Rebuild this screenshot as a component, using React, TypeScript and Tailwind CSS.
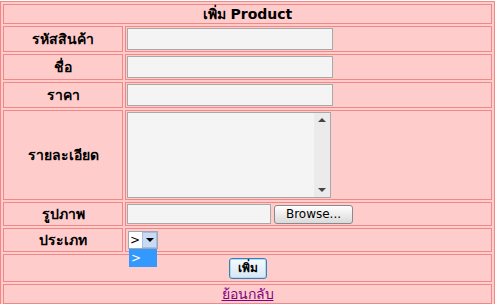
const cell = "border border-[#f08888]";
const labelCell = `${cell} flex items-center justify-center font-bold text-[14px] text-black`;

function TextBox() {
  return <div className="h-[22px] w-[206px] border border-[#a8a8a8] bg-[#f4f4f4]" />;
}

export default function App() {
  return (
    <div className="bg-white pt-px" style={{ fontFamily: '"DejaVu Sans", "Noto Sans", sans-serif' }}>
      <div className="grid grid-cols-[120px_1fr] gap-[2px] border border-[#f08888] bg-[#ffcccc] p-[2px]">
        <div className={`${cell} col-span-2 flex h-[20px] items-center justify-center text-[14px] font-bold text-black`}>
          เพิ่ม Product
        </div>

        <div className={`${labelCell} h-[26px]`}>รหัสสินค้า</div>
        <div className={`${cell} flex h-[26px] items-center px-px`}>
          <TextBox />
        </div>

        <div className={`${labelCell} h-[26px]`}>ชื่อ</div>
        <div className={`${cell} flex h-[26px] items-center px-px`}>
          <TextBox />
        </div>

        <div className={`${labelCell} h-[26px]`}>ราคา</div>
        <div className={`${cell} flex h-[26px] items-center px-px`}>
          <TextBox />
        </div>

        <div className={`${labelCell} h-[90px]`}>รายละเอียด</div>
        <div className={`${cell} h-[90px] px-px pt-px`}>
          <div className="flex h-[86px] w-[204px] border border-[#a8a8a8] bg-[#f4f4f4]">
            <div className="flex-1" />
            <div className="flex w-[16px] flex-col items-center justify-between bg-[#ebebeb] py-[5px]">
              <div className="h-0 w-0 border-x-[4px] border-b-[4px] border-x-transparent border-b-[#444]" />
              <div className="h-0 w-0 border-x-[4px] border-t-[4px] border-x-transparent border-t-[#444]" />
            </div>
          </div>
        </div>

        <div className={`${labelCell} h-[24px]`}>รูปภาพ</div>
        <div className={`${cell} flex h-[24px] items-center gap-[3px] px-px`}>
          <div className="h-[20px] w-[144px] border border-[#a8a8a8] bg-[#f4f4f4]" />
          <div className="flex h-[19px] w-[79px] items-center justify-center rounded-[3px] border border-[#8a8a8a] bg-gradient-to-b from-white to-[#dadada] text-[12px] text-black">
            Browse...
          </div>
        </div>

        <div className={`${labelCell} h-[24px]`}>ประเภท</div>
        <div className={`${cell} relative flex h-[24px] items-center pl-[2px]`}>
          <div className="flex h-[18px] w-[30px] items-stretch border border-[#9aa8b8] bg-white">
            <span className="flex-1 pl-[1px] text-[12px] leading-[16px] text-black">&gt;</span>
            <div className="flex w-[15px] items-center justify-center border border-[#a7bddb] bg-[#c8daf4]">
              <div className="h-0 w-0 border-x-[4px] border-t-[4px] border-x-transparent border-t-black" />
            </div>
          </div>
          <div className="absolute left-[3px] top-[20px] z-10 h-[18px] w-[28px] bg-[#3399ff] pl-[2px] text-[12px] leading-[18px] text-white">
            &gt;
          </div>
        </div>

        <div className={`${cell} col-span-2 flex h-[28px] items-center justify-center`}>
          <div className="flex h-[21px] w-[38px] items-center justify-center rounded-[3px] border border-[#3c7fb1] bg-gradient-to-b from-[#f4fbff] to-[#d8e6f2] text-[12px] font-bold text-black shadow-[inset_0_0_0_1px_#a9dbf6]">
            เพิ่ม
          </div>
        </div>

        <div className={`${cell} col-span-2 flex h-[20px] items-center justify-center`}>
          <a href="#" className="text-[14px] text-[#800080] underline">
            ย้อนกลับ
          </a>
        </div>
      </div>
    </div>
  );
}
